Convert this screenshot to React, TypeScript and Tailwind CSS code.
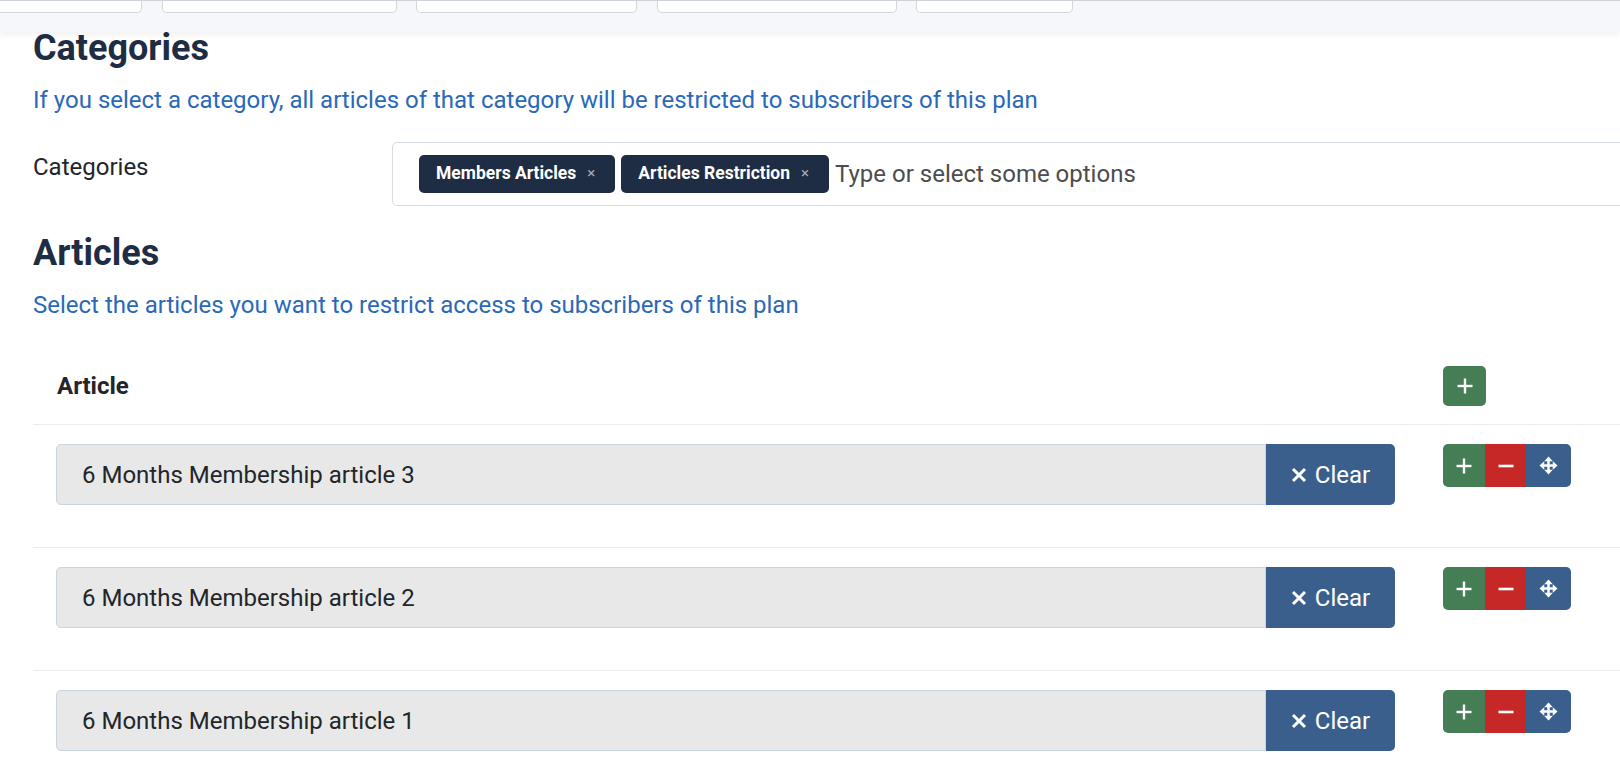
import React from "react";

const articles = [
  "6 Months Membership article 3",
  "6 Months Membership article 2",
  "6 Months Membership article 1",
];

const tags = ["Members Articles", "Articles Restriction"];

function PlusIcon() {
  return (
    <svg width="16" height="16" viewBox="0 0 16 16" fill="#fff">
      <rect x="6.8" y="0.5" width="2.4" height="15" />
      <rect x="0.5" y="6.8" width="15" height="2.4" />
    </svg>
  );
}

function MinusIcon() {
  return (
    <svg width="16" height="16" viewBox="0 0 16 16" fill="#fff">
      <rect x="0.5" y="6.7" width="15" height="2.6" />
    </svg>
  );
}

function MoveIcon() {
  return (
    <svg width="19" height="19" viewBox="0 0 20 20" fill="#fff">
      <polygon points="10,0.5 14.5,5.5 5.5,5.5" />
      <polygon points="10,19.5 14.5,14.5 5.5,14.5" />
      <polygon points="0.5,10 5.5,5.5 5.5,14.5" />
      <polygon points="19.5,10 14.5,5.5 14.5,14.5" />
      <rect x="8.7" y="4" width="2.6" height="12" />
      <rect x="4" y="8.7" width="12" height="2.6" />
    </svg>
  );
}

function TimesIcon() {
  return (
    <svg width="16" height="16" viewBox="0 0 16 16" stroke="#fff" strokeWidth="3">
      <line x1="2" y1="2" x2="14" y2="14" />
      <line x1="14" y1="2" x2="2" y2="14" />
    </svg>
  );
}

function RowButtons() {
  return (
    <div className="flex h-[43px]">
      <button className="flex w-[42px] items-center justify-center rounded-l-[5px] bg-[#457d54]">
        <PlusIcon />
      </button>
      <button className="flex w-[41px] items-center justify-center bg-[#c52827]">
        <MinusIcon />
      </button>
      <button className="flex w-[45px] items-center justify-center rounded-r-[5px] bg-[#3b5f8c]">
        <MoveIcon />
      </button>
    </div>
  );
}

export default function App() {
  return (
    <div className="relative h-[762px] w-[1620px] overflow-hidden bg-white font-[Roboto,sans-serif]">
      {/* toolbar strip */}
      <div className="relative z-10 h-[32px] border-t border-[#cfd3d8] bg-[#f5f7fa] shadow-[0_3px_6px_rgba(0,0,0,0.06)]">
        <div className="flex">
          <div className="h-[12px] w-[142px] rounded-br-[5px] border-r border-b border-[#d3d7dc] bg-white" />
          <div className="ml-[20px] h-[12px] w-[235px] rounded-b-[5px] border-x border-b border-[#d3d7dc] bg-white" />
          <div className="ml-[19px] h-[12px] w-[221px] rounded-b-[5px] border-x border-b border-[#d3d7dc] bg-white" />
          <div className="ml-[20px] h-[12px] w-[240px] rounded-b-[5px] border-x border-b border-[#d3d7dc] bg-white" />
          <div className="ml-[19px] h-[12px] w-[157px] rounded-b-[5px] border-x border-b border-[#d3d7dc] bg-white" />
        </div>
      </div>

      <div className="w-[1720px] pl-[33px]">
        {/* Categories */}
        <h2 className="mt-[1px] text-[36px] leading-[30px] font-bold text-[#1f2d44]">Categories</h2>
        <p className="mt-[19px] text-[24px] leading-[36px] text-[#2a69b8]">
          If you select a category, all articles of that category will be restricted to subscribers of this plan
        </p>

        <div className="mt-[24px] flex">
          <label className="w-[359px] pt-[7px] text-[24px] leading-[36px] text-[#22262a]">Categories</label>
          <div className="flex h-[64px] flex-1 items-center gap-[6px] rounded-l-[5px] border border-[#d5dce7] bg-white pb-[1px] pl-[26px]">
            {tags.map((t) => (
              <span
                key={t}
                className="flex h-[38px] items-center gap-[11px] rounded-[5px] bg-[#1f2d44] pr-[20px] pl-[17px] text-[17.5px] font-bold text-white"
              >
                {t}
                <span className="text-[15px] font-normal text-[#a3aab5]">×</span>
              </span>
            ))}
            <span className="text-[24px] text-[#4d4d4d]">Type or select some options</span>
          </div>
        </div>

        {/* Articles */}
        <h2 className="mt-[32px] text-[36px] leading-[30px] font-bold text-[#1f2d44]">Articles</h2>
        <p className="mt-[19px] text-[24px] leading-[36px] text-[#2a69b8]">
          Select the articles you want to restrict access to subscribers of this plan
        </p>

        <div className="mt-[25px]">
          <div className="grid grid-cols-[1386px_1fr] items-center py-[18px]">
            <div className="pl-6 text-[24px] leading-[36px] font-bold text-[#22262a]">Article</div>
            <div className="pl-6">
              <button className="flex h-[40px] w-[43px] items-center justify-center rounded-[5px] bg-[#457d54]">
                <PlusIcon />
              </button>
            </div>
          </div>

          {articles.map((a) => (
            <div key={a} className="grid grid-cols-[1386px_1fr] items-start border-t border-[#ececec] pt-[19px] pb-[42px]">
              <div className="flex pr-6 pl-[23px]">
                <div className="flex h-[61px] flex-1 items-center rounded-l-[5px] border border-[#c9d3e1] bg-[#e8e8e8] pl-[25px] text-[24px] text-[#22262a]">
                  {a}
                </div>
                <button className="flex h-[61px] w-[129px] items-center justify-center gap-[8px] rounded-r-[5px] bg-[#3b5f8c] text-[24px] text-white">
                  <TimesIcon />
                  Clear
                </button>
              </div>
              <div className="pl-6">
                <RowButtons />
              </div>
            </div>
          ))}
        </div>
      </div>
    </div>
  );
}
